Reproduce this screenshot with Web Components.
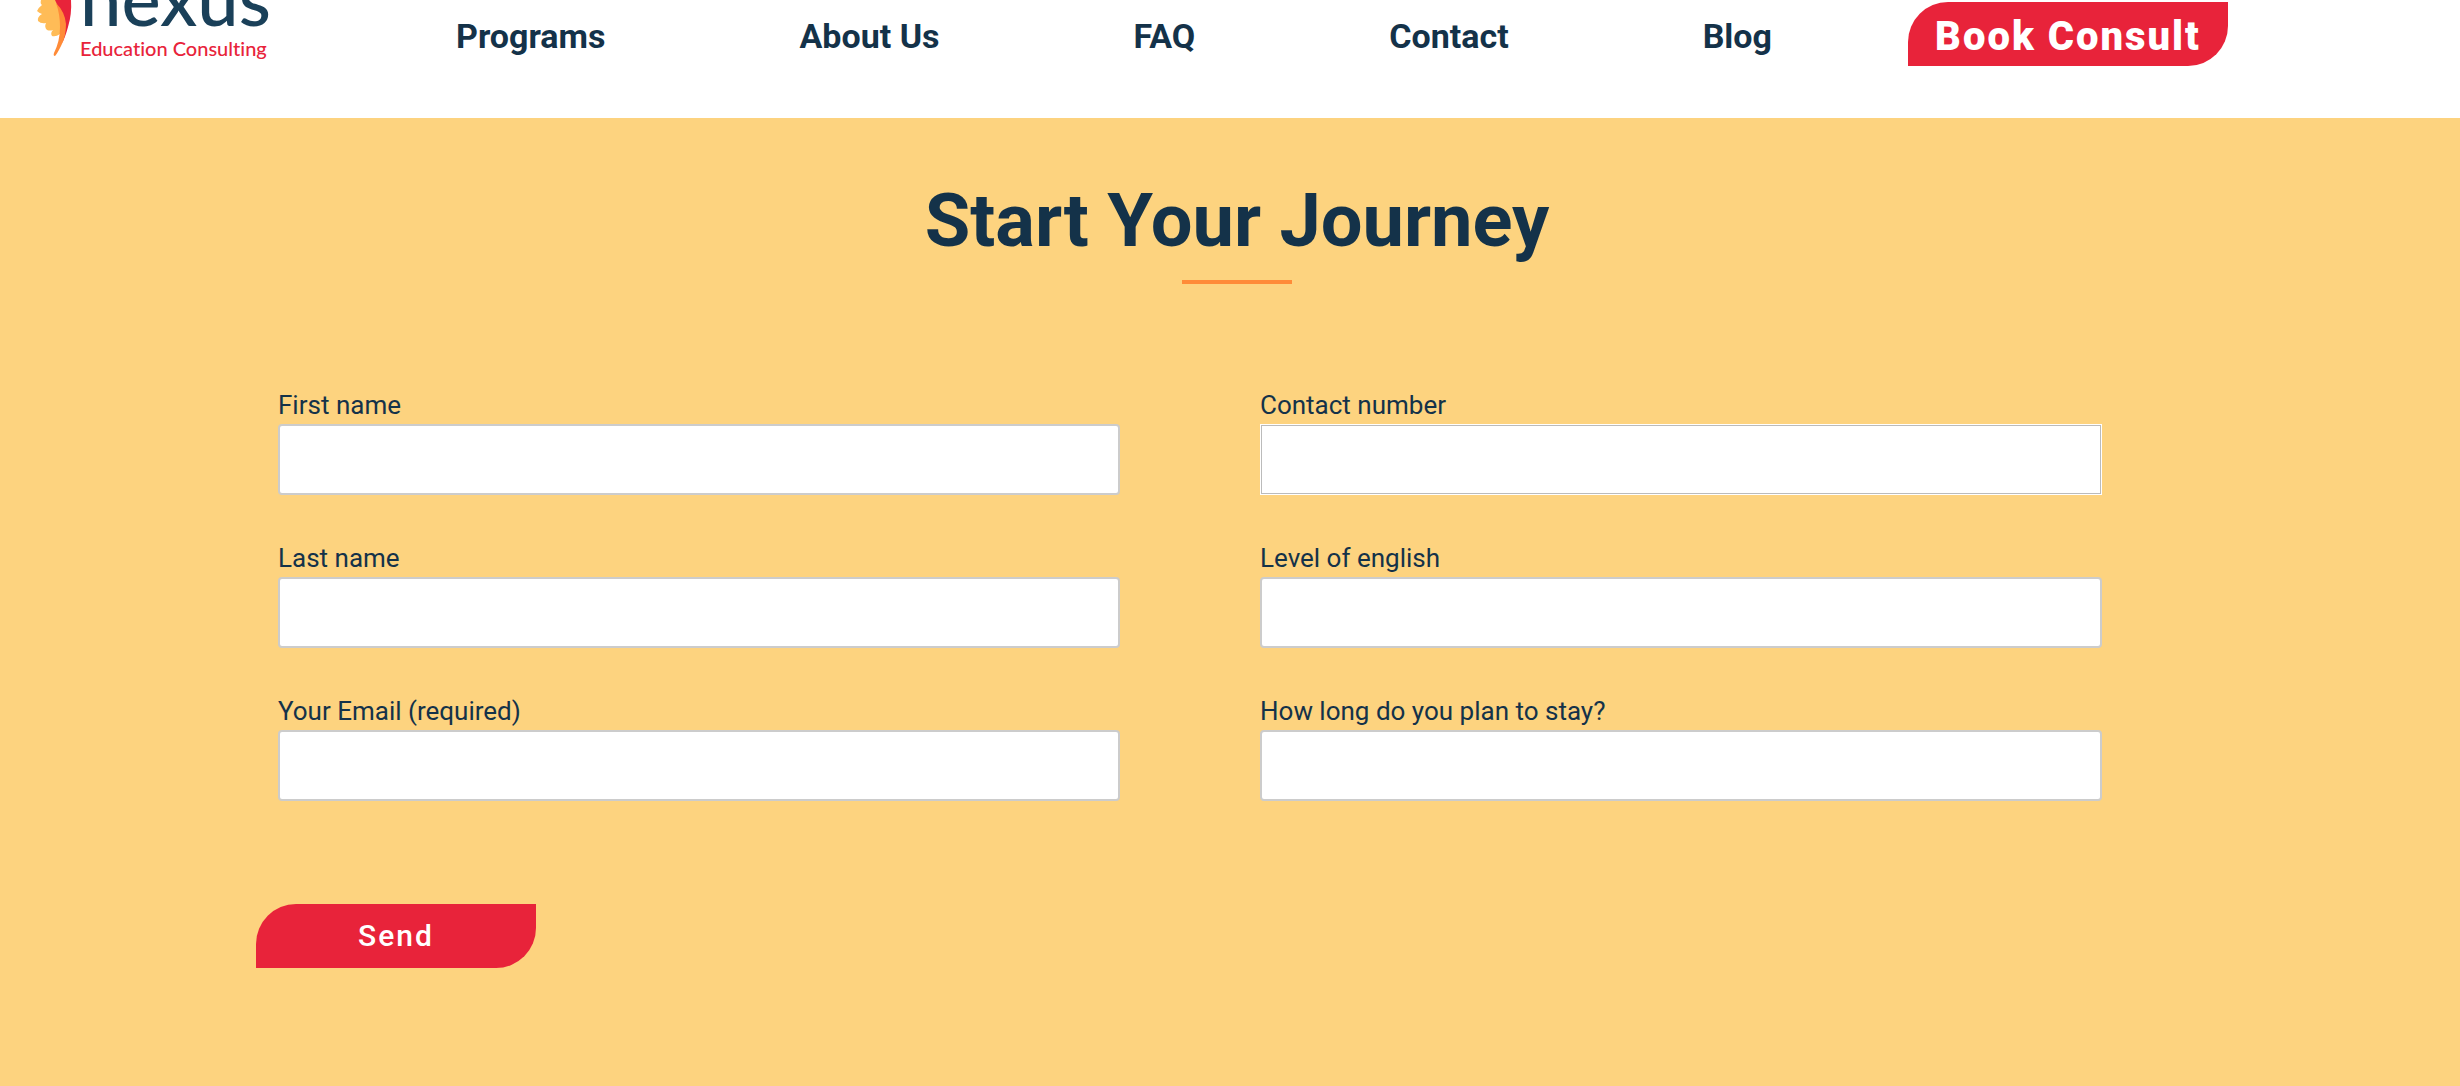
<!DOCTYPE html>
<html lang="en">
<head>
<meta charset="utf-8">
<title>Nexus Education Consulting</title>
<style>
  html, body { margin: 0; min-height: 100%; }
  body {
    --navy: #143249;
    --red: #e8233a;
    --sand: #fdd37f;
    --orange: #ff8b38;
    background: var(--sand);
    color: var(--navy);
    font-family: Roboto, "Liberation Sans", sans-serif;
  }
</style>
</head>
<body>
<nexus-page></nexus-page>

<script>
const define = (name, html, setup) => {
  const template = document.createElement('template');
  template.innerHTML = html;
  customElements.define(name, class extends HTMLElement {
    constructor() {
      super();
      this.attachShadow({ mode: 'open' }).append(template.content.cloneNode(true));
    }
    connectedCallback() { if (setup) setup(this, this.shadowRoot); }
  });
};

define('nexus-logo', `
  <style>
    :host { display: block; }
    a { display: flex; align-items: flex-end; gap: 7px; height: 62px; text-decoration: none; }
    svg { display: block; flex: none; width: 36px; height: 58px; margin-bottom: 4px; }
    .words { display: flex; flex-direction: column; white-space: nowrap; }
    .name { font: 500 74px/72px Lato, sans-serif; color: #1a4059; }
    .tag { font: 500 20px/28px Lato, sans-serif; font-variant-ligatures: none; color: var(--red); }
  </style>
  <a href="#home">
    <svg viewBox="0 0 36 58" aria-hidden="true">
      <path fill="#ffbc57" d="M4 0Q3 4 5 5Q1 8 0 11Q2 13 5 14Q0 17 1 21Q4 24 9 23Q7 27 10 30Q13 31 16 30Q13 33 15 36Q19 37 23 34L25 20L19 0Z"/>
      <path fill="#e8233a" d="M18 0H34Q35 14 31 27Q28 38 25 43L27 20Z"/>
      <path fill="#ff8b38" d="M19 3Q28 12 29 24Q29 37 24 46Q20 54 18 56Q16 56 17 53Q23 41 23 27Q23 14 19 3Z"/>
    </svg>
    <span class="words"><span class="name">nexus</span><span class="tag">Education Consulting</span></span>
  </a>`);

define('leaf-button', `
  <style>
    :host { display: block; }
    button {
      display: block; width: 100%; height: 64px; margin: 0; padding: 0; border: 0;
      border-radius: 40px 0; background: var(--red); color: #fff; cursor: pointer;
      font: 500 30px/64px Roboto, sans-serif; letter-spacing: 2px; white-space: nowrap;
    }
    :host([strong]) button { padding-top: 6px; font-size: 40px; line-height: 58px; font-weight: 900; }
  </style>
  <button type="button"><slot></slot></button>`);

define('site-header', `
  <style>
    :host { display: flex; align-items: flex-start; height: 118px; padding: 0 232px 0 37px; background: #fff; overflow: hidden; box-sizing: border-box; }
    nexus-logo { flex: 0 0 234px; }
    nav { flex: 1; display: flex; justify-content: space-between; padding: 16px 136px 0 185px; }
    a { color: inherit; text-decoration: none; font-size: 34px; line-height: 40px; font-weight: 700; white-space: nowrap; }
    leaf-button { flex: none; width: 320px; padding-top: 2px; }
  </style>
  <nexus-logo></nexus-logo>
  <nav aria-label="Main">
    <a href="#programs">Programs</a>
    <a href="#about">About Us</a>
    <a href="#faq">FAQ</a>
    <a href="#contact">Contact</a>
    <a href="#blog">Blog</a>
  </nav>
  <leaf-button strong>Book Consult</leaf-button>`);

define('section-title', `
  <style>
    :host { display: flex; flex-direction: column; align-items: center; gap: 15px; }
    h2 { margin: 0; font-size: 74px; line-height: 88px; font-weight: 700; white-space: nowrap; }
    span { width: 110px; height: 4px; background: var(--orange); }
  </style>
  <h2><slot></slot></h2><span></span>`);

define('form-field', `
  <style>
    :host { display: flex; flex-direction: column; gap: 4px; }
    label { font-size: 26px; line-height: 30px; }
    input {
      box-sizing: border-box; width: 100%; height: 71px; margin: 0; padding: 0 16px;
      border: 2px solid #ccc; border-radius: 4px; background: #fff; color: inherit;
      font: 26px/30px Roboto, sans-serif; outline: none;
    }
    :host([plain]) input { border: 1px solid #fff; border-radius: 0; box-shadow: inset 0 0 0 1px #bbb; }
  </style>
  <label for="box"></label>
  <input id="box">`, (host, root) => {
    root.querySelector('label').textContent = host.getAttribute('label');
    root.querySelector('input').type = host.getAttribute('type') || 'text';
  });

define('journey-form', `
  <style>
    :host { display: block; }
    form { display: flex; flex-direction: column; align-items: flex-start; gap: 103px; margin: 0; }
    .fields {
      display: grid; grid-template-columns: 1fr 1fr; grid-template-rows: repeat(3, auto); grid-auto-flow: column;
      gap: 48px 140px; align-self: stretch; padding: 0 358px 0 278px;
    }
    leaf-button { width: 280px; margin-left: 256px; }
  </style>
  <form>
    <div class="fields">
      <form-field label="First name"></form-field>
      <form-field label="Last name"></form-field>
      <form-field label="Your Email (required)" type="email"></form-field>
      <form-field label="Contact number" type="tel" plain></form-field>
      <form-field label="Level of english"></form-field>
      <form-field label="How long do you plan to stay?"></form-field>
    </div>
    <leaf-button>Send</leaf-button>
  </form>`);

define('nexus-page', `
  <style>
    :host { display: block; }
    main { display: flex; flex-direction: column; gap: 106px; padding: 59px 0 64px; background: var(--sand); }
    section-title { padding-left: 14px; }
  </style>
  <site-header></site-header>
  <main>
    <section-title>Start Your Journey</section-title>
    <journey-form></journey-form>
  </main>`);
</script>
</body>
</html>
